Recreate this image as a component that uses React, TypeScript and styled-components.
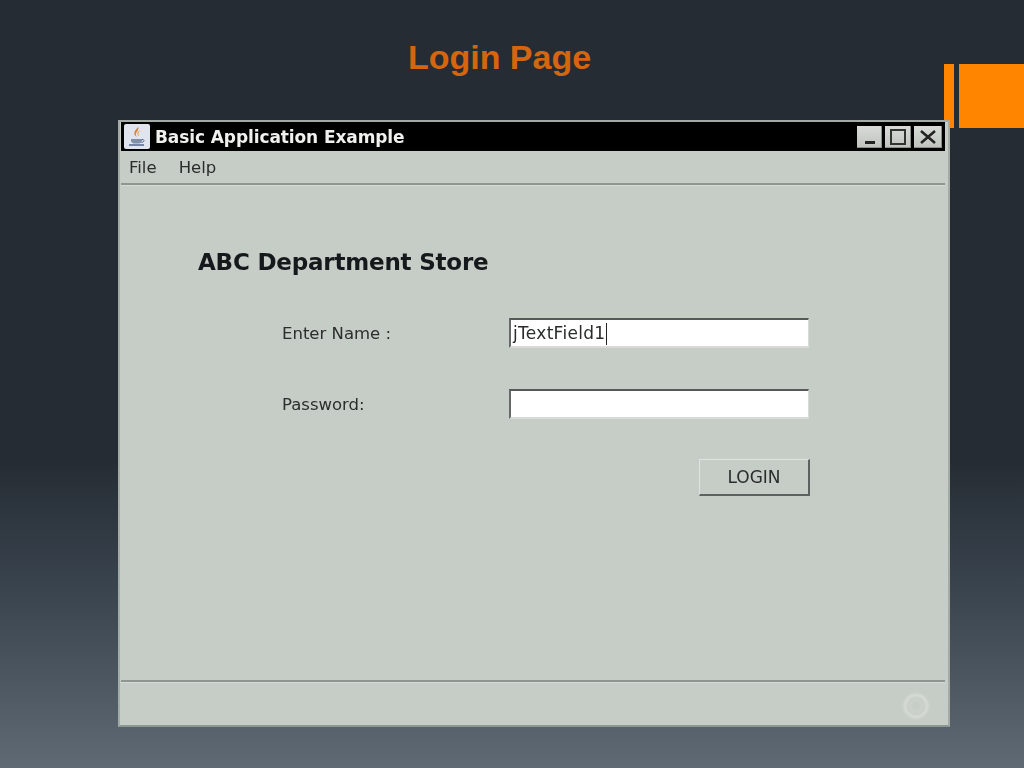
import React from "react";
import styled, { createGlobalStyle } from "styled-components";

const Global = createGlobalStyle`
  html, body { margin: 0; padding: 0; }
  body { width: 1024px; height: 768px; overflow: hidden; background: #252c34; }
`;

const Slide = styled.div`
  position: relative;
  width: 1024px;
  height: 768px;
  overflow: hidden;
  display: flex;
  flex-direction: column;
  background: linear-gradient(180deg, #252c34 0%, #252c34 60%, #414c57 82%, #5f6a75 100%);
`;

const Title = styled.h1`
  margin: 0;
  height: 120px;
  padding: 37px 25px 0 0;
  box-sizing: border-box;
  text-align: center;
  font: bold 34px/40px "Liberation Sans", Arial, sans-serif;
  color: #d5660e;
`;

const AccentThin = styled.div`
  position: absolute;
  left: 944px;
  top: 64px;
  width: 10px;
  height: 64px;
  background: #ff8400;
`;

const AccentWide = styled.div`
  position: absolute;
  left: 959px;
  top: 64px;
  width: 65px;
  height: 64px;
  background: #ff8400;
`;

const Window = styled.div`
  position: relative;
  z-index: 1;
  margin-left: 118px;
  width: 832px;
  height: 607px;
  box-sizing: border-box;
  border: 2px solid #a4aaa6;
  border-bottom-color: #8e9692;
  background: #c6ccc6;
  display: flex;
  flex-direction: column;
  filter: blur(0.4px);
  font-family: "DejaVu Sans", "Noto Sans", sans-serif;
`;

const TitleBar = styled.div`
  height: 29px;
  flex: none;
  margin: 0 3px 0 1px;
  background: #000;
  display: flex;
  align-items: center;
  padding: 0 3px 0 3px;
`;

const AppIcon = styled.svg`
  width: 26px;
  height: 25px;
  flex: none;
  margin-right: 5px;
`;

const TitleText = styled.span`
  flex: 1;
  font-size: 17px;
  font-weight: 700;
  letter-spacing: -0.1px;
  color: #f0f0ee;
  white-space: nowrap;
`;

const Controls = styled.div`
  display: flex;
  gap: 3px;
`;

const ControlButton = styled.div<{ $w: number }>`
  width: ${(p) => p.$w}px;
  height: 22px;
  background: linear-gradient(180deg, #d8dbd7, #bfc3be);
  box-shadow: inset -1px -1px 0 #8b8f8b;
  display: flex;
  align-items: center;
  justify-content: center;
`;

const ControlIcon = styled.svg`
  width: 22px;
  height: 22px;
`;

const MenuBar = styled.div`
  height: 32px;
  flex: none;
  display: flex;
  align-items: center;
  gap: 22px;
  padding: 0 0 0 9px;
  font-size: 16.5px;
  color: #2a2d2c;
`;

const Divider = styled.div`
  height: 2px;
  flex: none;
  margin: 0 3px 0 1px;
  background: #8f9691;
  border-bottom: 1px solid #d6dad5;
`;

const Content = styled.div`
  flex: 1;
  display: flex;
  flex-direction: column;
  padding: 60px 0 0 78px;
`;

const Heading = styled.h2`
  margin: 0;
  height: 32px;
  font-size: 23px;
  line-height: 32px;
  font-weight: 700;
  letter-spacing: -0.2px;
  color: #16191c;
  white-space: nowrap;
`;

const Form = styled.div`
  margin: 40px 0 0 84px;
  display: grid;
  grid-template-columns: 227px 300px;
  row-gap: 41px;
  align-items: center;
`;

const Label = styled.span`
  font-size: 16.5px;
  color: #2b2e2d;
`;

const Field = styled.div`
  height: 30px;
  box-sizing: border-box;
  background: #fff;
  border-top: 2px solid #55595a;
  border-left: 2px solid #66696a;
  border-right: 1px solid #d8dbd7;
  border-bottom: 2px solid #d8dbd7;
  padding-left: 2px;
  font-size: 17px;
  letter-spacing: 0.3px;
  line-height: 27px;
  color: #2a2c2c;
  display: flex;
`;

const Caret = styled.span`
  display: inline-block;
  width: 1px;
  height: 22px;
  margin: 3px 0 0 1px;
  background: #222;
`;

const ButtonRow = styled.div`
  margin: 40px 0 0 0;
  padding-left: 501px;
`;

const LoginButton = styled.div`
  width: 111px;
  height: 37px;
  box-sizing: border-box;
  border-top: 1px solid #dfe2de;
  border-left: 1px solid #dfe2de;
  border-right: 2px solid #5d6160;
  border-bottom: 2px solid #5d6160;
  display: flex;
  align-items: center;
  justify-content: center;
  font-size: 17px;
  color: #2a2d2c;
`;

const StatusBar = styled.div`
  height: 42px;
  flex: none;
  display: flex;
  align-items: center;
  justify-content: flex-end;
  padding: 4px 17px 0 0;
  box-sizing: border-box;
`;

const Spinner = styled.svg`
  width: 30px;
  height: 30px;
  opacity: 0.7;
  filter: blur(0.8px);
`;

export default function App() {
  return (
    <Slide>
      <Global />
      <Title>Login Page</Title>
      <AccentThin />
      <AccentWide />
      <Window>
        <TitleBar>
          <AppIcon viewBox="0 0 26 25">
            <rect width="26" height="25" rx="2" fill="#dfe4ee" />
            <path d="M14 3c2 3-3 5-2 8 .4 1.400 1 2 1 2-2-1-3-3-2.500-5C11 6 13 5 14 3z" fill="#d9822b" />
            <path d="M17 6c-3 2-3 4-2 6-1 0-2-2-1.500-3.500C14 7.500 16 6.500 17 6z" fill="#e0a050" />
            <path d="M7 15h11v1.500c0 2-2 3-3 3h-5c-1 0-3-1-3-3z" fill="#7f8fa8" />
            <path d="M5 21h15" stroke="#50668c" strokeWidth="1.500" />
            <path d="M18 15.500c2.500-.5 3 2.500-.5 3" stroke="#50668c" fill="none" />
          </AppIcon>
          <TitleText>Basic Application Example</TitleText>
          <Controls>
            <ControlButton $w={25}>
              <ControlIcon viewBox="0 0 22 22">
                <rect x="6" y="15" width="10" height="3" fill="#222" />
              </ControlIcon>
            </ControlButton>
            <ControlButton $w={26}>
              <ControlIcon viewBox="0 0 22 22">
                <rect x="4" y="4" width="14" height="14" fill="none" stroke="#333" strokeWidth="2" />
              </ControlIcon>
            </ControlButton>
            <ControlButton $w={28}>
              <ControlIcon viewBox="0 0 22 22">
                <path d="M4 5l14 12M18 5L4 17" stroke="#222" strokeWidth="2.500" />
              </ControlIcon>
            </ControlButton>
          </Controls>
        </TitleBar>
        <MenuBar>
          <span>File</span>
          <span>Help</span>
        </MenuBar>
        <Divider />
        <Content>
          <Heading>ABC Department Store</Heading>
          <Form>
            <Label>Enter Name :</Label>
            <Field>
              jTextField1
              <Caret />
            </Field>
            <Label>Password:</Label>
            <Field />
          </Form>
          <ButtonRow>
            <LoginButton>LOGIN</LoginButton>
          </ButtonRow>
        </Content>
        <Divider />
        <StatusBar>
          <Spinner viewBox="0 0 30 30">
            <circle cx="15" cy="15" r="11" fill="none" stroke="#dfe3df" strokeWidth="3" />
            <circle cx="15" cy="15" r="6" fill="none" stroke="#d2d7d2" strokeWidth="2" />
          </Spinner>
        </StatusBar>
      </Window>
    </Slide>
  );
}
